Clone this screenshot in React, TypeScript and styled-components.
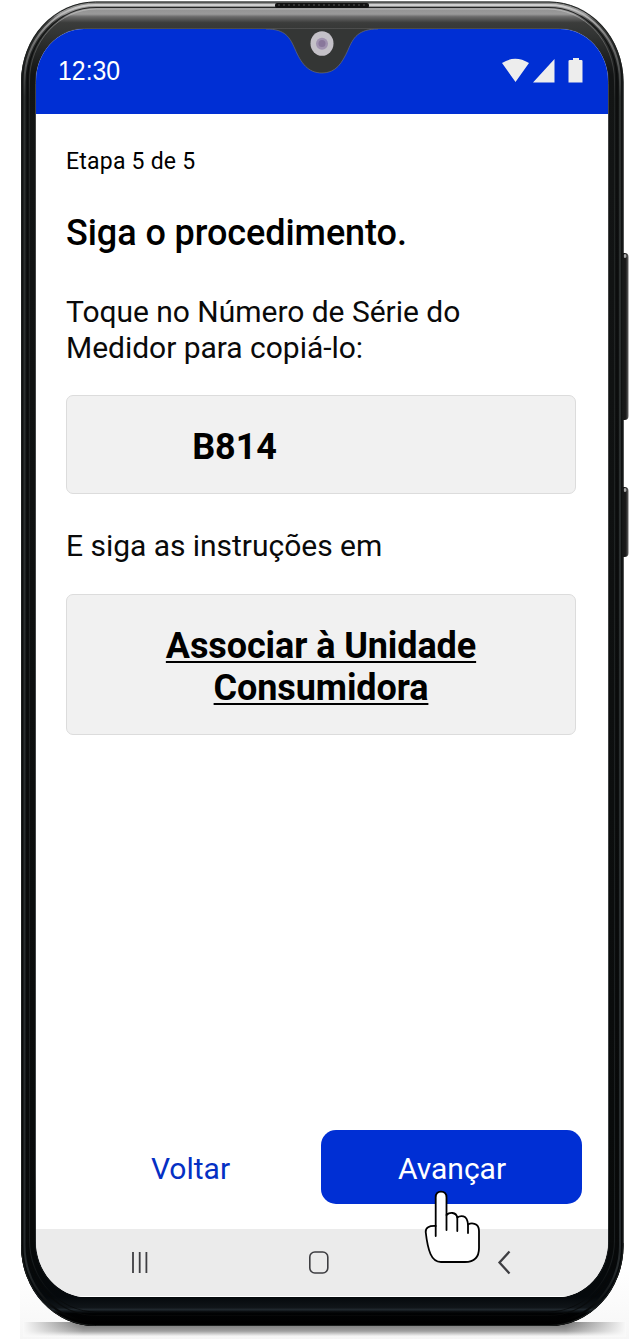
import React from "react";
import styled, { createGlobalStyle } from "styled-components";

const BLUE = "#002fd4";

const GlobalStyle = createGlobalStyle`
  *, *::before, *::after { box-sizing: border-box; }
  body { margin: 0; background: #fff; font-family: Roboto, "Liberation Sans", sans-serif; overflow: hidden; }
`;

const Device = styled.div`
  position: relative;
  width: 629px;
  height: 1339px;
  padding: 29px 21px 42px 36px;
  overflow: hidden;
`;

const Casing = styled.svg`
  position: absolute;
  inset: 0;
`;

const Screen = styled.main`
  position: relative;
  display: flex;
  flex-direction: column;
  height: 1268px;
  background: #fff;
  border-radius: 48px 48px 50px 50px / 52px 52px 56px 56px;
  overflow: hidden;
`;

const StatusBar = styled.header`
  display: flex;
  justify-content: space-between;
  flex: none;
  height: 85px;
  padding: 24px 25px 0 22px;
  background: ${BLUE};
`;

const Clock = styled.time`
  font: 27px/37px "Liberation Sans", Arial, sans-serif;
  color: #fff;
  transform: scaleX(0.92);
  transform-origin: 0 0;
`;

const StatusIcons = styled.svg`
  margin-top: 5px;
`;

const Notch = styled.svg`
  position: absolute;
  top: 0;
  left: 230px;
`;

const Content = styled.section`
  display: flex;
  flex-direction: column;
  flex: 1;
  padding: 33px 32px 0 30px;
`;

const Step = styled.p`
  margin: 0;
  font-size: 23px;
  line-height: 30px;
  letter-spacing: 0.22px;
`;

const Title = styled.h1`
  margin: 35px 0 0;
  font-size: 36px;
  font-weight: 500;
  line-height: 42px;
  letter-spacing: -0.07px;
`;

const Text = styled.p<{ $top: number }>`
  margin: ${(p) => p.$top}px 0 0;
  font-size: 30px;
  line-height: 36px;
  letter-spacing: -0.03px;
  color: #0a0a0a;
`;

const Box = styled.div<{ $top: number; $height: number; $shift?: number }>`
  display: flex;
  align-items: center;
  justify-content: center;
  flex: none;
  height: ${(p) => p.$height}px;
  margin-top: ${(p) => p.$top}px;
  padding: 4px ${(p) => p.$shift ?? 0}px 0 0;
  background: #f1f1f1;
  border: 1px solid #dcdcdc;
  border-radius: 7px;
  font-size: 36px;
  font-weight: 700;
  line-height: 42px;
  letter-spacing: -0.1px;
  text-align: center;
`;

const BoxLink = styled.a`
  width: 360px;
  color: #000;
  text-decoration: underline;
  text-decoration-thickness: 2px;
  text-underline-offset: 3px;
`;

const Actions = styled.div`
  display: flex;
  flex: none;
  justify-content: flex-end;
  height: 99px;
  padding: 0 26px 25px 24px;
`;

const Button = styled.button<{ $primary?: boolean }>`
  width: 261px;
  height: 74px;
  padding: 3px 0 0 ${(p) => (p.$primary ? 1 : 0)}px;
  border: 0;
  border-radius: 15px;
  background: ${(p) => (p.$primary ? BLUE : "transparent")};
  color: ${(p) => (p.$primary ? "#fff" : "#0530c4")};
  font: 30px/36px Roboto, sans-serif;
`;

const SystemNav = styled.nav`
  flex: none;
  height: 68px;
  padding-left: 94px;
  background: #ebebeb;
  border-bottom: 1px solid #fff;
`;

const Pointer = styled.svg`
  position: absolute;
  left: 423px;
  top: 1189px;
`;

function Frame() {
  return (
    <Casing width="629" height="1339" viewBox="0 0 629 1339">
      <defs>
        <linearGradient id="top" x1="0" y1="0" x2="0" y2="1">
          <stop offset="0" stopColor="#8a8b89" />
          <stop offset=".005" stopColor="#929292" />
          <stop offset=".0095" stopColor="#9a9a9a" />
          <stop offset=".0115" stopColor="#6a6a6a" />
          <stop offset=".016" stopColor="#3b3c3b" />
          <stop offset=".024" stopColor="#333534" />
          <stop offset=".055" stopColor="#131515" />
          <stop offset="1" stopColor="#070909" />
        </linearGradient>
        <linearGradient id="bottom" x1="0" y1="1243" x2="0" y2="1326" gradientUnits="userSpaceOnUse">
          <stop offset="0" stopColor="#070909" />
          <stop offset=".65" stopColor="#05090c" />
          <stop offset=".78" stopColor="#101519" />
          <stop offset=".8" stopColor="#20282e" />
          <stop offset=".83" stopColor="#0b0f12" />
          <stop offset=".85" stopColor="#010203" />
          <stop offset="1" stopColor="#000" />
        </linearGradient>
        <linearGradient id="rim" x1="0" y1="0" x2="0" y2="1">
          <stop offset="0" stopColor="#d0d0d0" />
          <stop offset=".025" stopColor="#777" />
          <stop offset=".07" stopColor="#2c302f" />
          <stop offset=".96" stopColor="#262b2d" />
          <stop offset=".99" stopColor="#080a0b" />
          <stop offset="1" stopColor="#000" />
        </linearGradient>
        <linearGradient id="edge" x1="0" y1="0" x2="0" y2="1">
          <stop offset="0" stopColor="#555" />
          <stop offset=".9" stopColor="#555a5c" />
          <stop offset="1" stopColor="#05090c" />
        </linearGradient>
        <linearGradient id="shadow" x1="0" y1="0" x2="0" y2="1">
          <stop offset="0" stopColor="#777" />
          <stop offset=".3" stopColor="#858585" />
          <stop offset=".65" stopColor="#a0a0a0" />
          <stop offset="1" stopColor="#f4f4f4" />
        </linearGradient>
        <linearGradient id="fade" x1="0" y1="0" x2="1" y2="0">
          <stop offset="0" stopColor="#f9f9f9" />
          <stop offset=".1" stopColor="#f9f9f9" stopOpacity="0" />
          <stop offset=".9" stopColor="#f9f9f9" stopOpacity="0" />
          <stop offset="1" stopColor="#f9f9f9" />
        </linearGradient>
        <linearGradient id="floor" x1="0" y1="0" x2="0" y2="1">
          <stop offset="0" stopColor="#fff" />
          <stop offset="1" stopColor="#f6f6f6" />
        </linearGradient>
        <linearGradient id="key" x1="0" y1="0" x2="1" y2="0">
          <stop offset="0" stopColor="#080808" />
          <stop offset=".75" stopColor="#1c1c1c" />
          <stop offset="1" stopColor="#666" />
        </linearGradient>
      </defs>
      <rect x="20" y="1270" width="609" height="69" fill="url(#floor)" />
      <rect x="24" y="1322" width="601" height="14" fill="url(#shadow)" />
      <rect x="23" y="1321" width="603" height="16" fill="url(#fade)" />
      <rect x="618" y="253" width="10.5" height="167" rx="4" fill="url(#key)" />
      <rect x="618" y="487" width="10.5" height="70" rx="4" fill="url(#key)" />
      <ellipse cx="625" cy="256" rx="1.500" ry="2" fill="#aaa" />
      <ellipse cx="625" cy="490" rx="1.500" ry="2" fill="#aaa" />
      <rect x="21" y="1.500" width="602.500" height="1324.500" rx="74" ry="80" fill="url(#top)" />
      <path d="M21 1243V1246A74 80 0 0 0 95 1326H549.500A74 80 0 0 0 623.500 1246V1243Z" fill="url(#bottom)" />
      <g fill="none">
        <rect x="21.500" y="2" width="601.500" height="1323.500" rx="74" ry="80" stroke="#1c1f1e" />
        <rect x="24.500" y="5" width="595.500" height="1317" rx="71" ry="77" stroke="url(#rim)" strokeWidth="2" />
        <rect x="27.500" y="7.500" width="589.500" height="1308" rx="69" ry="74" stroke="#090a0a" strokeWidth="1.200" strokeOpacity=".8" />
        <rect x="29.500" y="9" width="585" height="1303" rx="67" ry="72" stroke="url(#rim)" strokeOpacity=".6" />
        <rect x="35.500" y="28.500" width="573" height="1269" rx="49" ry="55" stroke="url(#edge)" strokeOpacity=".7" />
      </g>
      <rect x="275" y="3" width="94" height="5" rx="2" fill="#111" />
      <path d="M278 5H366" stroke="#555" strokeDasharray="2 3" />
    </Casing>
  );
}

export default function App() {
  return (
    <>
      <GlobalStyle />
      <Device>
        <Frame />
        <Screen>
          <StatusBar>
            <Clock>12:30</Clock>
            <StatusIcons width="82" height="26" viewBox="501 58 82 26" fill="#ededed">
              <path d="M502 63Q515 54.500 529 63L515.500 82ZM533 82.500L554.500 59V82.500ZM570 60H573V58H579V60H581.500Q582.500 60 582.500 61V82.500H568.500V61Q568.500 60 570 60Z" />
            </StatusIcons>
          </StatusBar>
          <Content>
            <Step>Etapa 5 de 5</Step>
            <Title>Siga o procedimento.</Title>
            <Text $top={40}>
              Toque no Número de Série do
              <br />
              Medidor para copiá-lo:
            </Text>
            <Box $top={29} $height={99} $shift={173}>B814</Box>
            <Text $top={34}>E siga as instruções em</Text>
            <Box $top={30} $height={141}>
              <BoxLink>Associar à Unidade Consumidora</BoxLink>
            </Box>
          </Content>
          <Actions>
            <Button>Voltar</Button>
            <Button $primary>Avançar</Button>
          </Actions>
          <SystemNav>
            <svg width="384" height="67" viewBox="130 1229 384 67" fill="none" stroke="#3e3e42" strokeWidth="2">
              <path d="M133 1252V1273M139.700 1252V1273M146.400 1252V1273" strokeWidth="1.800" />
              <rect x="309.800" y="1252" width="18" height="21" rx="5" strokeWidth="1.600" />
              <path d="M509.500 1251.500L499.500 1262.500L509.500 1273.500" strokeWidth="2.300" />
            </svg>
          </SystemNav>
          <Notch width="112" height="46" viewBox="266 29 112 46">
            <path d="M266 28V29C286 29 290 38 295 49C301 63 308 73 322 73C336 73 342 63 348 50C353 38 358 29 378 29V28Z" fill="#343635" />
            <path d="M266 29C286 29 290 38 295 49C301 63 308 73 322 73C336 73 342 63 348 50C353 38 358 29 378 29" fill="none" stroke="#777" strokeWidth=".6" />
            <ellipse cx="322" cy="43.500" rx="11.500" ry="12.300" fill="#c4c1c8" />
            <circle cx="322" cy="43.700" r="6" fill="#a193b0" />
            <circle cx="322" cy="43.500" r="3.500" fill="#89779b" />
          </Notch>
        </Screen>
        <Pointer width="60" height="76" viewBox="423 1189 60 76" fill="#fff" stroke="#000" strokeWidth="1.800" strokeLinecap="round" strokeLinejoin="round">
          <path d="M435.700 1226V1197.500Q435.700 1191.700 441 1191.700Q446.500 1191.700 446.500 1197.500V1215Q449 1212.500 452.500 1213Q456.500 1213.500 457.300 1217.500Q460 1215.500 463.500 1216.300Q467.500 1217.500 468 1224.500Q471 1222.800 474.500 1223.800Q479 1225 479 1231V1248Q479 1262 465 1262H441Q434 1262 430.500 1254C427.500 1247 426.500 1239 425.700 1232Q425.500 1225.500 435.700 1226Z" />
          <path d="M435.700 1226V1236M446.500 1215V1230M457.300 1217.500V1231M468 1224.500V1233" />
        </Pointer>
      </Device>
    </>
  );
}
